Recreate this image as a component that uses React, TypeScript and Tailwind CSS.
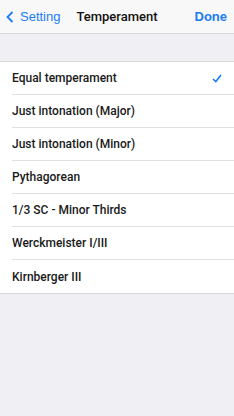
const ITEMS = [
  "Equal temperament",
  "Just intonation (Major)",
  "Just intonation (Minor)",
  "Pythagorean",
  "1/3 SC - Minor Thirds",
  "Werckmeister I/III",
  "Kirnberger III",
];

export default function App() {
  const selected = 0;

  return (
    <div className="w-[234px] h-[416px] bg-[#efeff4] font-['Liberation_Sans',Arial,sans-serif] antialiased">
      <div className="h-[34px] bg-[#f8f8f8] border-b border-[#d8d8d8] flex items-center relative">
        <div className="flex items-center pl-[6px] text-[#1a7cf6] text-[13px] pt-[1px]">
          <svg width="8" height="12" viewBox="0 0 8 12" className="mr-[6px]">
            <path d="M6.5 1 L1.5 6 L6.5 11" fill="none" stroke="#1a7cf6" strokeWidth="1.8" />
          </svg>
          Setting
        </div>
        <div className="absolute left-0 right-0 text-center text-[13px] text-[#111] font-medium font-['Roboto',sans-serif] pointer-events-none pt-[1px]">
          Temperament
        </div>
        <div className="ml-auto pr-[7px] text-[13px] font-bold text-[#1a7cf6] pt-[1px]">Done</div>
      </div>

      <div className="mt-[27px] bg-white border-t border-b border-[#d8d8d8]">
        {ITEMS.map((item, i) => (
          <div key={item} className="pl-[12px]">
            <div
              className={
                "h-[33px] flex items-center pr-[12px] text-[12px] font-medium font-['Roboto',sans-serif] text-[#1a1a1a] " +
                (i < ITEMS.length - 1 ? "border-b border-[#e0e0e0]" : "")
              }
            >
              <span className="flex-1">{item}</span>
              {i === selected && (
                <svg width="10" height="9" viewBox="0 0 10 9">
                  <path d="M1 5 L3.8 7.6 L9 1" fill="none" stroke="#1a7cf6" strokeWidth="1.6" />
                </svg>
              )}
            </div>
          </div>
        ))}
      </div>
    </div>
  );
}
